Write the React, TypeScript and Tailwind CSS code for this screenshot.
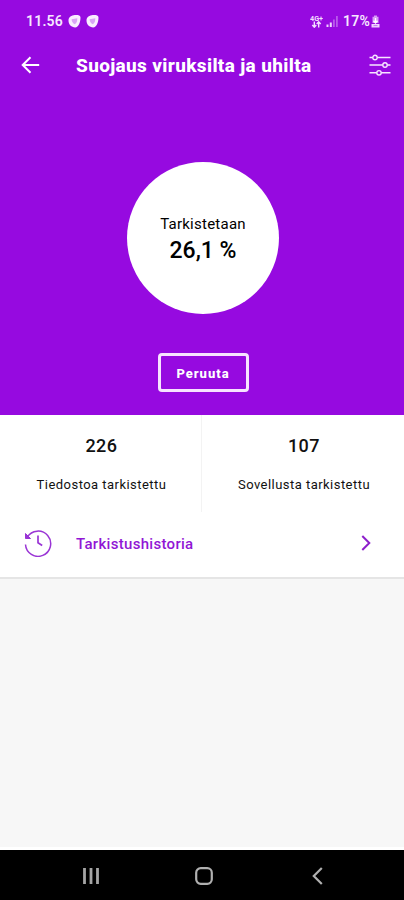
import React from 'react';

interface ScanStat {
  value: string;
  label: string;
}

const SCAN_STATS: ScanStat[] = [
  { value: '226', label: 'Tiedostoa tarkistettu' },
  { value: '107', label: 'Sovellusta tarkistettu' },
];

// --- Icons ---
const ShieldIcon = () => (
  <svg width="13" height="14" viewBox="0 0 13 14" fill="none">
    <path d="M.5 6.500C.5 3 3.600 1.200 6.800 1c3-.2 5.700.2 5.700 2.400 0 4.800-2 10-5.300 10C3.400 13.400.5 10.400.5 6.500Z" fill="#f9edff" />
    <path d="M3.600 5.300 9.300 4.300c.1 2.700-.8 5-2.500 5.900C4.900 9.500 3.700 7.600 3.600 5.300Z" fill="#d9a3f5" />
  </svg>
);

const NetworkIcon = () => (
  <svg width="13" height="13" viewBox="0 0 13 13" fill="none" stroke="#f3dcff">
    <text x="0" y="5.800" fontSize="7" fontWeight="700" fontFamily="Roboto, sans-serif" fill="#f3dcff" stroke="none" textLength="13" lengthAdjust="spacingAndGlyphs">4G+</text>
    <path d="M4.300 6.500v5.500M2.300 10l2 2.200 2-2.200M8.700 12.500V7M6.700 9l2-2.200 2 2.200" strokeWidth="1.400" />
  </svg>
);

const SignalIcon = () => (
  <svg width="12" height="12" viewBox="0 0 12 12">
    <path d="M.5 9.500h2V12h-2zM3.800 7.500h2V12h-2z" fill="#efd2ff" />
    <path d="M7 4.500h1.800V12H7zM10 1h1.800v11H10z" fill="#b95aeb" />
  </svg>
);

const BatteryIcon = () => (
  <svg width="9" height="13" viewBox="0 0 9 13" fill="none">
    <path d="M3 .5h3v1.300h1.500v6.200h-6V1.800H3z" fill="#d79cf6" />
    <path d="M4.500 3v5M2.500 5.800l2 2.200 2-2.200" stroke="#fff" strokeWidth="1.300" />
    <path d="M.5 9h8v3.500h-8z" fill="#f0d5ff" />
    <path d="M2.500 10.600h4" stroke="#b95aeb" strokeWidth=".8" />
  </svg>
);

const BackArrow = () => (
  <svg width="20" height="18" viewBox="0 0 20 18" fill="none" stroke="#fff" strokeWidth="2">
    <path d="M18.200 9H1.800M9.500 1.200 1.700 9l7.800 7.800" />
  </svg>
);

const SlidersIcon = () => (
  <svg width="22" height="22" viewBox="0 0 22 22" fill="none" stroke="#f7e6ff" strokeWidth="1.400">
    <path d="M.5 3.500h3.300M8.200 3.500h13.300M.5 11h13.300M18.200 11h3.300M.5 18.800h7.300M12.200 18.800h9.300" />
    <circle cx="6" cy="3.500" r="2.200" />
    <circle cx="16" cy="11" r="2.200" />
    <circle cx="10" cy="18.800" r="2.200" />
  </svg>
);

const HistoryIcon = () => (
  <svg width="28" height="28" viewBox="0 0 28 28" fill="none" stroke="#9a35d5" strokeWidth="1.500">
    <path d="M3.300 8.200A12.600 12.600 0 1 1 1.500 15.500" />
    <path d="M1.500 4.500v5h5z" fill="#9a35d5" strokeWidth="1" />
    <path d="M14 6.500v7.200l4.200 2.800" strokeWidth="1.700" />
  </svg>
);

const ChevronRight = () => (
  <svg width="10" height="16" viewBox="0 0 10 16" fill="none" stroke="#8d1fcb" strokeWidth="2">
    <path d="m1.300 1 7 7-7 7" />
  </svg>
);

export default function App() {
  return (
    <div className="flex h-[900px] w-[404px] flex-col overflow-hidden bg-[#f7f7f7] font-[Roboto,sans-serif] text-[#111]">
      <section className="flex h-[415px] shrink-0 flex-col bg-[#960ae0] text-white">
        {/* Status bar */}
        <div className="flex h-[42px] items-center justify-between pl-[26px] pr-6 text-sm font-semibold">
          <div className="flex items-center gap-[5px] text-[#f7e8ff]">
            <span className="tracking-[0.2px]">11.56</span>
            <ShieldIcon />
            <ShieldIcon />
          </div>
          <div className="flex items-center gap-[3px] text-[#f7e8ff]">
            <NetworkIcon />
            <SignalIcon />
            <span className="ml-0.5 tracking-[0.2px]">17%</span>
            <span className="-ml-0.5"><BatteryIcon /></span>
          </div>
        </div>

        {/* Title bar */}
        <header className="flex h-[46px] items-center pl-[21px] pr-[13px]">
          <BackArrow />
          <h1 className="ml-[35px] flex-1 whitespace-nowrap pt-[3px] text-[19px] font-extrabold tracking-[0.34px]">Suojaus viruksilta ja uhilta</h1>
          <SlidersIcon />
        </header>

        {/* Scan progress */}
        <div className="flex flex-col items-center pl-0.5 pt-[74px]">
          <div className="flex size-[152px] flex-col items-center justify-center rounded-full bg-white pt-0.5 text-black">
            <span className="text-[15px] leading-5 tracking-[0.25px]">Tarkistetaan</span>
            <span className="mt-[3px] text-[23px] font-medium leading-7">26,1 %</span>
          </div>
          <button className="mt-[39px] h-[39px] w-[91px] rounded-[4px] border-[3px] border-[#f7e3ff] pt-0.5 text-[13px] font-extrabold tracking-[1px]">
            Peruuta
          </button>
        </div>
      </section>

      <section className="grid h-[97px] shrink-0 grid-cols-2 bg-white">
        {SCAN_STATS.map((stat) => (
          <div key={stat.label} className="flex flex-col items-center border-r border-[#f3f3f3] pl-0.5 pt-[19px] last:border-r-0">
            <span className="text-lg font-medium leading-6 tracking-[0.5px]">{stat.value}</span>
            <span className="mt-[18px] text-[13px] leading-[18px] tracking-[0.46px]">{stat.label}</span>
          </div>
        ))}
      </section>

      <button className="flex h-[67px] shrink-0 items-center border-b-2 border-[#e5e5e5] bg-white pb-[3px] pl-6 pr-[33px] text-left">
        <HistoryIcon />
        <span className="ml-6 flex-1 pt-0.5 text-[15px] font-medium tracking-[0.3px] text-[#9116d5]">Tarkistushistoria</span>
        <ChevronRight />
      </button>

      {/* Navigation bar */}
      <nav className="mt-auto flex h-[53px] shrink-0 items-center border-t-[3px] border-white bg-black pl-[83px] pr-[81px] pt-0.5">
        <svg width="16" height="18" viewBox="0 0 16 18" stroke="#a5a5a5" strokeWidth="2.800">
          <path d="M1.500 1v16M8 1v16M14.500 1v16" />
        </svg>
        <svg className="ml-24" width="18" height="18" viewBox="0 0 18 18" fill="none" stroke="#b0b0b0" strokeWidth="2.200">
          <rect x="1.200" y="1.200" width="15.600" height="15.600" rx="4.500" />
        </svg>
        <svg className="ml-auto" width="11" height="18" viewBox="0 0 11 18" fill="none" stroke="#b0b0b0" strokeWidth="2.200">
          <path d="M9.800 1 1.800 9l8 8" />
        </svg>
      </nav>
    </div>
  );
}
